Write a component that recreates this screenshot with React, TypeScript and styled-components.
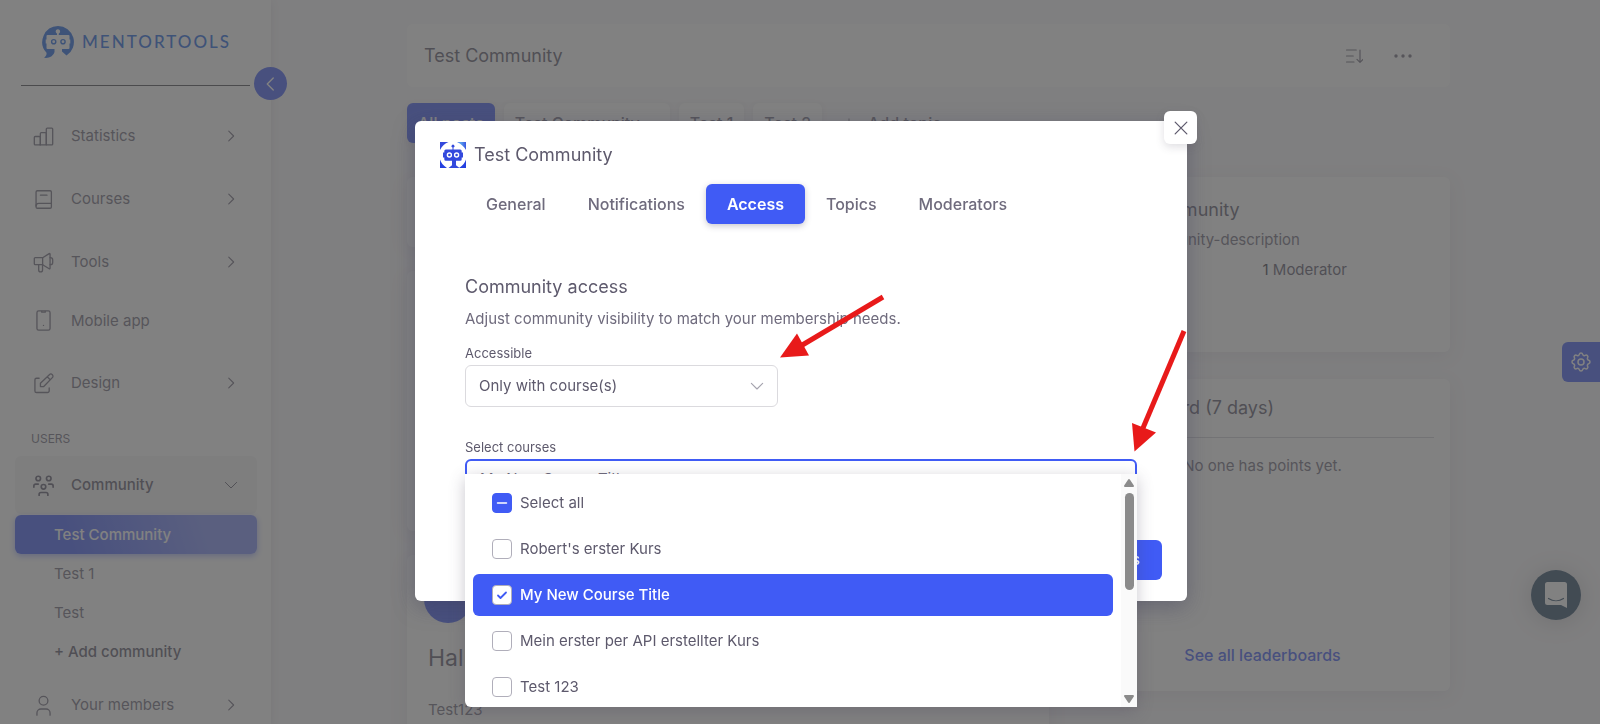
import React, { useState } from 'react';
import styled, { createGlobalStyle, css } from 'styled-components';

const primary = '#405bf5';
const brand = '#1f66e0';
const heading = '#5d596c';
const body = '#6f6b7d';
const cardShadow = '0 4px 18px rgba(75, 70, 92, 0.1)';

const GlobalStyle = createGlobalStyle`
  *, *::before, *::after { box-sizing: border-box; }
  body {
    margin: 0;
    overflow: hidden;
    background: #f8f7fa;
    color: ${body};
    font: 400 15px/24px Inter, "Liberation Sans", sans-serif;
  }
  button, select, input { font: inherit; color: inherit; }
  h1, h2, p, ul { margin: 0; padding: 0; }
  ul { list-style: none; }
  a { color: inherit; text-decoration: none; }
`;

/* ---------- Icons ---------- */

const Stroke = styled.svg<{ $size?: number; $weight?: number }>`
  display: block;
  flex: none;
  width: ${p => p.$size ?? 21}px;
  height: ${p => p.$size ?? 21}px;
  fill: none;
  stroke: currentColor;
  stroke-width: ${p => p.$weight ?? 1.5};
  stroke-linecap: round;
  stroke-linejoin: round;
`;

const icons: Record<string, React.ReactNode> = {
  stats: (
    <>
      <rect x="1.500" y="12" width="6.900" height="9.500" rx="1" />
      <path d="M8.400 21.500V8.500a1 1 0 0 1 1-1h4.800a1 1 0 0 1 1 1V21.500" />
      <path d="M15.200 21.500V3.500a1 1 0 0 1 1-1h5.300a1 1 0 0 1 1 1v17a1 1 0 0 1-1 1H8" />
    </>
  ),
  book: (
    <>
      <rect x="3.500" y="2" width="17.500" height="20" rx="1.500" />
      <path d="M3.500 19.500a3 3 0 0 1 3-3H21M8.500 7h7.500" />
    </>
  ),
  horn: (
    <>
      <path d="M2.500 6.500h8.500v8H2.500a1 1 0 0 1-1-1v-6a1 1 0 0 1 1-1z" />
      <path d="M11 6.500L18.500 1.900a.6.6 0 0 1 1 .5v16.200a.6.6 0 0 1-1 .5L11 14.500" />
      <path d="M19.500 6.500h.5a2.500 2.500 0 0 1 2.500 2.500v3a2.500 2.500 0 0 1-2.500 2.500h-.5" />
      <path d="M6.500 14.500V20.500a2.200 2.200 0 0 0 4.400 0v-6" />
    </>
  ),
  phone: (
    <>
      <rect x="4.500" y="1" width="15" height="22" rx="2" />
      <path d="M10 1.500v1h4v-1M12 17.500v.1" />
    </>
  ),
  edit: (
    <>
      <path d="M7 6H4a1.800 1.800 0 0 0-1.800 1.800V20.500a1.800 1.800 0 0 0 1.800 1.800h12.700a1.800 1.800 0 0 0 1.800-1.800v-3.500" />
      <path d="M8.500 15.500v-3.800L18.700 1.900a2.400 2.400 0 0 1 3.400 3.400L12.300 15.500H8.500zM16.300 4.300l3.400 3.400" />
    </>
  ),
  community: (
    <>
      <circle cx="6" cy="4" r="2.600" />
      <circle cx="18" cy="4" r="2.600" />
      <circle cx="12" cy="13.500" r="2.600" />
      <path d="M1 14v-1.500a2 2 0 0 1 2-2h3M23 14v-1.500a2 2 0 0 0-2-2h-3M7 23.500v-1.500a2 2 0 0 1 2-2h6a2 2 0 0 1 2 2v1.500" />
    </>
  ),
  user: (
    <>
      <circle cx="12" cy="6.500" r="5" />
      <path d="M4.500 23v-2.500a4.500 4.500 0 0 1 4.500-4.500h6a4.500 4.500 0 0 1 4.500 4.500v2.500" />
    </>
  ),
  right: <path d="M9 5.500l6.500 6.500-6.500 6.500" />,
  left: <path d="M15 4l-8 8 8 8" />,
  down: <path d="M4.500 8.500l7.500 7.500 7.500-7.500" />,
  close: <path d="M5 5l14 14M19 5L5 19" />,
  plus: <path d="M12 5v14M5 12h14" />,
  sort: <path d="M2 4h13M2 12h9M2 20h10M20 4v16M16 16.500l4 4 4-4" />,
  gear: (
    <>
      <path d="M10.325 4.317c.426-1.756 2.924-1.756 3.350 0a1.724 1.724 0 0 0 2.573 1.066c1.543-.94 3.310.826 2.370 2.370a1.724 1.724 0 0 0 1.065 2.572c1.756.426 1.756 2.924 0 3.350a1.724 1.724 0 0 0-1.066 2.573c.94 1.543-.826 3.310-2.370 2.370a1.724 1.724 0 0 0-2.572 1.065c-.426 1.756-2.924 1.756-3.350 0a1.724 1.724 0 0 0-2.573-1.066c-1.543.94-3.310-.826-2.370-2.370a1.724 1.724 0 0 0-1.065-2.572c-1.756-.426-1.756-2.924 0-3.350a1.724 1.724 0 0 0 1.066-2.573c-.94-1.543.826-3.310 2.370-2.370 1 .608 2.296.07 2.572-1.065z" />
      <circle cx="12" cy="12" r="3" />
    </>
  ),
};

function Icon({ name, size, weight }: { name: string; size?: number; weight?: number }) {
  return (
    <Stroke viewBox="0 0 24 24" $size={size} $weight={weight} aria-hidden="true">
      {icons[name]}
    </Stroke>
  );
}

const LogoMark = () => (
  <svg width="32" height="32" viewBox="0 0 32 32" aria-hidden="true">
    <path
      fill={brand}
      d="M16 0a16 16 0 0 1 8.500 29.500L20 25.500V23h6.500a1 1 0 0 0 1-1v-4.500h.8v-4h-.8V10a1 1 0 0 0-1-1h-9.700V7.400a2.200 2.200 0 1 0-1.800 0V9H5.500a1 1 0 0 0-1 1v3.500h-.8v4h.8V22a1 1 0 0 0 1 1H12.500v3C11 30.500 7 32.500 2 31.800c2-1.300 2.800-3.300 2.500-5A16 16 0 0 1 16 0z"
    />
    <circle cx="11.700" cy="15.700" r="2.100" fill="none" stroke={brand} strokeWidth="1.400" />
    <circle cx="21" cy="15.700" r="2.100" fill="none" stroke={brand} strokeWidth="1.400" />
  </svg>
);

const CommunityAvatar = () => (
  <svg width="26" height="26" viewBox="0 0 26 26" aria-hidden="true">
    <defs>
      <linearGradient id="avatarTop" x1="0" y1="0" x2="1" y2="0">
        <stop offset="0.500" stopColor="#3348dc" />
        <stop offset="0.800" stopColor="#5aa0ee" />
        <stop offset="1" stopColor="#3a56e0" />
      </linearGradient>
    </defs>
    <path d="M0 0h8.500C5 1.500 2 4 0 8zM17 0h9v8C24 4.500 21 2 17 0z" fill="url(#avatarTop)" />
    <path d="M0 17.500c1 3 3 6 7 8.500H0zM26 17.500c-1 3-3 6-7 8.500h7z" fill="#2440e0" />
    <path
      fill="#3349dd"
      d="M12.500 7.500V5.600a1.500 1.500 0 1 1 1 0v1.900h6.700a1.500 1.500 0 0 1 1.500 1.500v1.500h1.300v5h-1.300v1.700a1.500 1.500 0 0 1-1.500 1.500h-4.200v4.500l3.500 2.800h-11l3.500-2.800v-4.500H5.800a1.500 1.500 0 0 1-1.500-1.500v-1.700H3v-5h1.300V9a1.500 1.500 0 0 1 1.500-1.500z"
    />
    <circle cx="9.400" cy="13" r="2" fill="#3349dd" stroke="#fff" strokeWidth="1.400" />
    <circle cx="16.600" cy="13" r="2" fill="#3349dd" stroke="#fff" strokeWidth="1.400" />
  </svg>
);

/* ---------- Page shell ---------- */

const Page = styled.div`
  display: flex;
  height: 100vh;
  overflow: hidden;
`;

const Sidebar = styled.aside`
  position: relative;
  flex: none;
  width: 271px;
  padding: 0 14px 0 15px;
  background: #fff;
  box-shadow: 0 2px 8px rgba(75, 70, 92, 0.14);
`;

const Brand = styled.a`
  display: flex;
  align-items: center;
  gap: 8px;
  height: 86px;
  margin: 0 7px 0 6px;
  padding: 0 0 2px 21px;
  border-bottom: 1px solid #4a4a52;
  color: ${brand};
  font: 500 17px/24px Lato, sans-serif;
  letter-spacing: 2px;
`;

const CollapseButton = styled.button`
  position: absolute;
  top: 67px;
  right: -16px;
  display: grid;
  place-items: center;
  width: 33px;
  height: 33px;
  padding: 0;
  border: 0;
  border-radius: 50%;
  background: ${primary};
  color: #fff;
`;

const Nav = styled.nav`
  display: flex;
  flex-direction: column;
  gap: 5px;
  padding-top: 21px;
`;

const NavRow = styled.a<{ $leaf?: boolean; $open?: boolean }>`
  display: flex;
  align-items: center;
  gap: 17px;
  height: ${p => (p.$leaf ? 49 : 58)}px;
  margin-bottom: ${p => (p.$leaf ? 4 : 0)}px;
  padding: 0 17px 0 18px;
  border-radius: 6px;
  ${p => p.$open && css`
    background: #f4f4f6;
    color: ${heading};
    font-weight: 500;
  `}
`;

const NavLabel = styled.span`
  flex: 1;
`;

const NavHeading = styled.p`
  padding: 12px 16px 2px;
  font-size: 12px;
  line-height: 20px;
`;

const SubMenu = styled.ul`
  margin-top: -4px;
`;

const SubLink = styled.a<{ $active?: boolean; $strong?: boolean }>`
  display: flex;
  align-items: center;
  height: 39px;
  padding: 0 39px;
  border-radius: 6px;
  font-weight: ${p => (p.$active || p.$strong ? 500 : 400)};
  ${p => p.$strong && css`color: ${heading};`}
  ${p => p.$active && css`
    background: linear-gradient(72deg, ${primary} 22%, #7c8df9 77%);
    box-shadow: 0 2px 6px rgba(64, 91, 247, 0.5);
    color: #fff;
  `}
`;

/* ---------- Main area ---------- */

const Main = styled.main`
  flex: 1;
  min-width: 0;
  padding: 24px 150px 0 136px;
`;

const Card = styled.section`
  border-radius: 6px;
  background: #fff;
  box-shadow: ${cardShadow};
`;

const TitleBar = styled.header`
  display: flex;
  align-items: center;
  gap: 21px;
  height: 63px;
  padding: 0 33px 0 17px;
  border-radius: 6px;
  background: #fff;
`;

const Heading = styled.h2`
  color: ${heading};
  font-size: 18px;
  font-weight: 400;
  line-height: 28px;
`;

const TitleHeading = styled(Heading)`
  flex: 1;
`;

const PlainButton = styled.button`
  display: grid;
  place-items: center;
  width: 28px;
  height: 28px;
  padding: 0;
  border: 0;
  background: none;
`;

const TopicBar = styled.div`
  display: flex;
  align-items: center;
  gap: 9px;
  margin-top: 16px;
`;

const TopicTab = styled.button<{ $active?: boolean; $wide?: boolean; $bare?: boolean }>`
  display: flex;
  align-items: center;
  gap: 12px;
  height: 40px;
  padding: 0 ${p => (p.$wide ? 30 : 11)}px 0 11px;
  border: 0;
  border-radius: 6px;
  background: ${p => (p.$active ? primary : p.$bare ? 'none' : '#fff')};
  color: ${p => (p.$active ? '#fff' : body)};
  box-shadow: ${p => (p.$bare ? 'none' : '0 2px 6px rgba(75, 70, 92, 0.1)')};
  font-size: 16px;
  font-weight: 500;
`;

const Columns = styled.div`
  display: grid;
  grid-template-columns: minmax(0, 642fr) minmax(0, 375fr);
  gap: 26px;
  margin-top: 34px;
`;

const Column = styled.div`
  display: flex;
  flex-direction: column;
  gap: 24px;
`;

const Composer = styled(Card)`
  min-height: 70px;
`;

const PinnedPost = styled(Card)`
  min-height: 260px;
`;

const Post = styled(Card)`
  min-height: 220px;
  padding: 20px 21px;
`;

const Avatar = styled.div`
  width: 48px;
  height: 48px;
  margin-left: -4px;
  border-radius: 50%;
  background: ${primary};
`;

const PostTitle = styled(Heading)`
  margin: 19px 0 24px;
  font-size: 23px;
  line-height: 32px;
`;

const AboutCard = styled(Card)`
  min-height: 175px;
  padding: 18px 26px;
  line-height: 30px;
`;

const AboutTitle = styled(Heading)`
  line-height: 30px;
`;

const Moderators = styled.p`
  display: grid;
  grid-template-columns: 1fr 1fr;
  color: ${heading};
`;

const ModeratorCount = styled.span`
  grid-column: 2;
`;

const Count = styled.span`
  color: #3d3a48;
`;

const BoardCard = styled(Card)`
  display: flex;
  flex-direction: column;
  min-height: 312px;
  padding: 0 16px 24px;
  margin-top: 3px;
`;

const BoardTitle = styled(Heading)`
  padding: 15px 0;
  border-bottom: 1px solid #d0cfd6;
`;

const BoardEmpty = styled.p`
  padding-top: 16px;
  text-align: center;
`;

const BoardLink = styled.a`
  margin-top: auto;
  color: ${primary};
  font-size: 16px;
  font-weight: 500;
  text-align: center;
`;

const SettingsTab = styled.button`
  position: fixed;
  top: 342px;
  right: 0;
  display: grid;
  place-items: center;
  width: 38px;
  height: 40px;
  padding: 0;
  border: 0;
  border-radius: 6px 0 0 6px;
  background: ${primary};
  color: #fff;
`;

const ChatButton = styled.button`
  position: fixed;
  right: 19px;
  bottom: 104px;
  display: grid;
  place-items: center;
  width: 50px;
  height: 50px;
  padding: 0;
  border: 0;
  border-radius: 50%;
  background: #2c4a66;
  box-shadow: 0 2px 24px rgba(0, 0, 0, 0.2);
`;

/* ---------- Modal ---------- */

const Backdrop = styled.div`
  position: fixed;
  inset: 0;
  padding: 121px 24px 0 26px;
  background: rgba(76, 76, 76, 0.7);
`;

const Dialog = styled.div`
  position: relative;
  max-width: 772px;
  margin: 0 auto;
  padding: 20px 25px 21px;
  border-radius: 6px;
  background: #fff;
  box-shadow: 0 6px 22px rgba(60, 60, 90, 0.4);
`;

const CloseButton = styled.button`
  position: absolute;
  top: -10px;
  right: -10px;
  display: grid;
  place-items: center;
  width: 33px;
  height: 33px;
  padding: 0;
  border: 0;
  border-radius: 6px;
  background: #fff;
  color: ${heading};
  box-shadow: 0 3px 8px rgba(75, 70, 92, 0.18);
`;

const DialogTitle = styled.div`
  display: flex;
  align-items: center;
  gap: 8px;
`;

const TabList = styled.div`
  display: flex;
  margin: 15px 25px 0;
`;

const Tab = styled.button<{ $active?: boolean }>`
  height: 40px;
  padding: 0 21px;
  border: 0;
  border-radius: 6px;
  background: ${p => (p.$active ? primary : 'none')};
  box-shadow: ${p => (p.$active ? '0 2px 6px rgba(75, 70, 92, 0.3)' : 'none')};
  color: ${p => (p.$active ? '#fff' : body)};
  font-size: 16px;
  font-weight: ${p => (p.$active ? 600 : 500)};
`;

const Panel = styled.div`
  padding: 49px 25px 0;
`;

const Lead = styled.p`
  margin-top: 6px;
`;

const FieldLabel = styled.label`
  display: block;
  width: max-content;
  margin: 12px 0 2px;
  color: ${heading};
  font-size: 13px;
  line-height: 20px;
`;

const CoursesLabel = styled(FieldLabel)`
  margin-top: 30px;
`;

const SelectWrap = styled.div`
  display: grid;
  align-items: center;
  width: 313px;
  color: #a5a3ae;
  > * { grid-area: 1 / 1; }
  > svg { justify-self: end; margin-right: 12px; pointer-events: none; }
`;

const NativeSelect = styled.select`
  width: 100%;
  height: 42px;
  padding: 0 40px 0 13px;
  appearance: none;
  border: 1px solid #dbdade;
  border-radius: 6px;
  background: #fff;
  color: ${heading};
`;

const Combo = styled.div`
  position: relative;
`;

const ComboField = styled.button`
  display: block;
  width: 100%;
  height: 40px;
  padding: 0 13px;
  border: 2px solid ${primary};
  border-radius: 6px;
  background: #fff;
  text-align: left;
`;

const Dropdown = styled.div`
  position: absolute;
  top: 15px;
  left: 0;
  right: 0;
  display: flex;
  height: 233px;
  overflow: hidden;
  border-radius: 0 0 0 6px;
  background: #fff;
  box-shadow: 0 4px 16px rgba(75, 70, 92, 0.3);
`;

const OptionList = styled.ul`
  display: flex;
  flex: 1;
  flex-direction: column;
  gap: 4px;
  padding: 8px;
`;

const Option = styled.label<{ $selected?: boolean }>`
  display: flex;
  align-items: center;
  gap: 8px;
  height: 42px;
  padding: 0 19px;
  border-radius: 6px;
  background: ${p => (p.$selected ? primary : 'none')};
  color: ${p => (p.$selected ? '#fff' : heading)};
  font-weight: ${p => (p.$selected ? 500 : 400)};
`;

const CheckWrap = styled.span`
  display: grid;
  place-items: center;
  > * { grid-area: 1 / 1; }
  > svg { pointer-events: none; }
`;

const Check = styled.input<{ $mixed?: boolean }>`
  width: 20px;
  height: 20px;
  margin: 0;
  appearance: none;
  border: 1px solid ${p => (p.$mixed ? primary : '#b0aeba')};
  border-radius: 4px;
  background: ${p => (p.$mixed ? primary : '#fff')};
`;

const ScrollRail = styled.div`
  display: flex;
  flex: none;
  flex-direction: column;
  align-items: center;
  width: 16px;
  padding: 4px 0 3px;
  background: #fafafa;
`;

const ScrollThumb = styled.div`
  width: 9px;
  height: 97px;
  margin: 5px 0 auto;
  border-radius: 5px;
  background: #8b8b8b;
`;

const Actions = styled.div`
  display: flex;
  justify-content: flex-end;
  margin-top: 41px;
`;

const SaveButton = styled.button`
  height: 40px;
  padding: 0 22px;
  border: 0;
  border-radius: 6px;
  background: ${primary};
  color: #fff;
  font-weight: 500;
`;

const Pointer = styled.svg`
  position: absolute;
  top: 170px;
  left: 360px;
  width: 420px;
  height: 170px;
  pointer-events: none;
`;

/* ---------- Content ---------- */

const mainNav = [
  { icon: 'stats', label: 'Statistics' },
  { icon: 'book', label: 'Courses' },
  { icon: 'horn', label: 'Tools' },
  { icon: 'phone', label: 'Mobile app', leaf: true },
  { icon: 'edit', label: 'Design' },
];

const tabs = ['General', 'Notifications', 'Access', 'Topics', 'Moderators'];

const courses = ["Robert's erster Kurs", 'My New Course Title', 'Mein erster per API erstellter Kurs', 'Test 123'];

function SideNavigation() {
  return (
    <Sidebar>
      <Brand href="#">
        <LogoMark />
        MENTORTOOLS
      </Brand>
      <CollapseButton aria-label="Collapse menu"><Icon name="left" size={18} weight={1.8} /></CollapseButton>
      <Nav>
        {mainNav.map(item => (
          <NavRow key={item.label} href="#" $leaf={item.leaf}>
            <Icon name={item.icon} />
            <NavLabel>{item.label}</NavLabel>
            {!item.leaf && <Icon name="right" size={18} />}
          </NavRow>
        ))}
        <NavHeading>USERS</NavHeading>
        <NavRow href="#" $open>
          <Icon name="community" weight={1.9} />
          <NavLabel>Community</NavLabel>
          <Icon name="down" size={18} weight={1.3} />
        </NavRow>
        <SubMenu>
          <li><SubLink href="#" $active>Test Community</SubLink></li>
          <li><SubLink href="#">Test 1</SubLink></li>
          <li><SubLink href="#">Test</SubLink></li>
          <li><SubLink href="#" $strong>+ Add community</SubLink></li>
        </SubMenu>
        <NavRow href="#">
          <Icon name="user" />
          <NavLabel>Your members</NavLabel>
          <Icon name="right" size={18} />
        </NavRow>
      </Nav>
    </Sidebar>
  );
}

function CommunityPage() {
  return (
    <Main>
      <TitleBar>
        <TitleHeading as="h1">Test Community</TitleHeading>
        <PlainButton aria-label="Sort"><Icon name="sort" size={18} weight={1.6} /></PlainButton>
        <PlainButton aria-label="More">
          <svg width="18" height="4" viewBox="0 0 18 4" fill="currentColor" aria-hidden="true">
            <circle cx="2" cy="2" r="1.700" /><circle cx="9" cy="2" r="1.700" /><circle cx="16" cy="2" r="1.700" />
          </svg>
        </PlainButton>
      </TitleBar>
      <TopicBar>
        <TopicTab $active>All posts</TopicTab>
        <TopicTab $wide>Test Community</TopicTab>
        <TopicTab>Test 1</TopicTab>
        <TopicTab>Test 2</TopicTab>
        <TopicTab $bare><Icon name="plus" size={14} />Add topic</TopicTab>
      </TopicBar>
      <Columns>
        <Column>
          <Composer />
          <PinnedPost />
          <Post>
            <Avatar />
            <PostTitle>Hallo</PostTitle>
            <p>Test123</p>
          </Post>
        </Column>
        <Column>
          <AboutCard>
            <AboutTitle>Test Community</AboutTitle>
            <p>Test community-description</p>
            <Moderators><ModeratorCount><Count>1</Count> Moderator</ModeratorCount></Moderators>
          </AboutCard>
          <BoardCard>
            <BoardTitle>Leaderboard (7 days)</BoardTitle>
            <BoardEmpty>No one has points yet.</BoardEmpty>
            <BoardLink href="#">See all leaderboards</BoardLink>
          </BoardCard>
        </Column>
      </Columns>
    </Main>
  );
}

function CourseDropdown() {
  const [selected, setSelected] = useState(['My New Course Title']);
  const toggle = (name: string) =>
    setSelected(s => (s.includes(name) ? s.filter(n => n !== name) : [...s, name]));
  return (
    <Dropdown>
      <OptionList>
        <li>
          <Option>
            <CheckWrap>
              <Check type="checkbox" $mixed />
              <Stroke viewBox="0 0 20 20" $size={20}><path d="M5.500 10h9" stroke="#fff" /></Stroke>
            </CheckWrap>
            Select all
          </Option>
        </li>
        {courses.map(name => {
          const on = selected.includes(name);
          return (
            <li key={name}>
              <Option $selected={on}>
                <CheckWrap>
                  <Check type="checkbox" checked={on} onChange={() => toggle(name)} />
                  {on && <Stroke viewBox="0 0 20 20" $size={20} $weight={1.8}><path d="M6 10.500l2.500 2.500 5.500-5.500" stroke={primary} /></Stroke>}
                </CheckWrap>
                {name}
              </Option>
            </li>
          );
        })}
      </OptionList>
      <ScrollRail>
        <svg width="12" height="10" viewBox="0 0 12 10" aria-hidden="true">
          <path d="M6 2L10 8H2z" fill="#8b8b8b" stroke="#8b8b8b" strokeWidth="2" strokeLinejoin="round" />
        </svg>
        <ScrollThumb />
        <svg width="12" height="10" viewBox="0 0 12 10" aria-hidden="true">
          <path d="M6 8L10 2H2z" fill="#8b8b8b" stroke="#8b8b8b" strokeWidth="2" strokeLinejoin="round" />
        </svg>
      </ScrollRail>
    </Dropdown>
  );
}

function SettingsDialog() {
  return (
    <Backdrop>
      <Dialog role="dialog" aria-label="Community settings">
        <DialogTitle>
          <CommunityAvatar />
          <Heading>Test Community</Heading>
        </DialogTitle>
        <TabList role="tablist">
          {tabs.map(t => (
            <Tab key={t} role="tab" aria-selected={t === 'Access'} $active={t === 'Access'}>{t}</Tab>
          ))}
        </TabList>
        <Panel>
          <Heading>Community access</Heading>
          <Lead>Adjust community visibility to match your membership needs.</Lead>
          <FieldLabel htmlFor="accessible">Accessible</FieldLabel>
          <SelectWrap>
            <NativeSelect id="accessible" defaultValue="course">
              <option value="course">Only with course(s)</option>
            </NativeSelect>
            <Icon name="down" size={18} />
          </SelectWrap>
          <CoursesLabel htmlFor="courses">Select courses</CoursesLabel>
          <Combo>
            <ComboField id="courses" type="button" aria-expanded="true">My New Course Title</ComboField>
            <CourseDropdown />
          </Combo>
        </Panel>
        <Actions>
          <SaveButton>Save settings</SaveButton>
        </Actions>
        <CloseButton aria-label="Close"><Icon name="close" size={20} /></CloseButton>
        <Pointer viewBox="0 0 420 170" aria-hidden="true">
          <g fill="#e81a1a" stroke="#e81a1a">
            <path d="M108 6L24 56" strokeWidth="5" fill="none" />
            <path d="M5 66.500L22 42.500 34 64.500z" stroke="none" />
            <path d="M409 40L368 137" strokeWidth="5" fill="none" />
            <path d="M359.500 160.500L357 132 381 141.500z" stroke="none" />
          </g>
        </Pointer>
      </Dialog>
    </Backdrop>
  );
}

export default function App() {
  return (
    <>
      <GlobalStyle />
      <Page>
        <SideNavigation />
        <CommunityPage />
      </Page>
      <SettingsTab aria-label="Settings"><Icon name="gear" size={24} /></SettingsTab>
      <ChatButton aria-label="Open chat">
        <svg width="22" height="26" viewBox="0 0 22 26" aria-hidden="true">
          <path d="M2.500 0h17A2.500 2.500 0 0 1 22 2.500V26l-6-3H2.500A2.500 2.500 0 0 1 0 20.500v-18A2.500 2.500 0 0 1 2.500 0z" fill="#fff" />
          <path d="M3.500 16.500c4.500 3 10.500 3 15 0" fill="none" stroke="#2c4a66" strokeWidth="1.200" strokeLinecap="round" />
        </svg>
      </ChatButton>
      <SettingsDialog />
    </>
  );
}
